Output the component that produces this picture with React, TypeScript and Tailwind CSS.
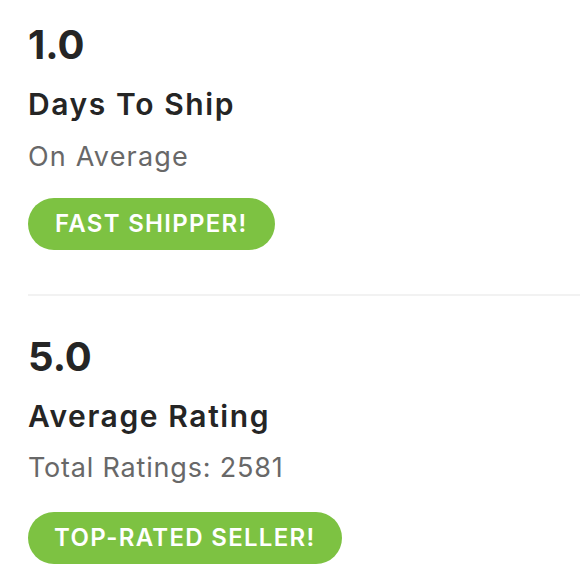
export default function App() {
  return (
    <div className="w-[580px] h-[580px] overflow-hidden bg-white font-['Inter','Liberation_Sans',sans-serif] text-[#252525]">
      <div className="pl-[28px] pt-[21px]">
        <div className="text-[40px] leading-[48px] font-bold">1.0</div>
        <div className="mt-[17px] text-[30px] leading-[36px] font-semibold tracking-[1.6px]">Days To Ship</div>
        <div className="mt-[18px] text-[27px] leading-[34px] tracking-[1.2px] text-[#686868]">On Average</div>
        <div className="mt-[24px] inline-flex h-[52px] items-center rounded-full bg-[#7dc242] px-[27px] text-[24px] font-semibold tracking-[1.3px] text-white">
          FAST SHIPPER!
        </div>
      </div>
      <div className="ml-[28px] mt-[44px] h-[2px] bg-[#f2f2f2]" />
      <div className="pl-[28px] pt-[37px]">
        <div className="text-[40px] leading-[48px] font-bold">5.0</div>
        <div className="mt-[17px] text-[30px] leading-[36px] font-semibold tracking-[1.6px]">Average Rating</div>
        <div className="mt-[17px] text-[27px] leading-[34px] tracking-[0.8px] text-[#686868]">Total Ratings: 2581</div>
        <div className="mt-[27px] inline-flex h-[52px] items-center rounded-full bg-[#7dc242] px-[26px] text-[24px] font-semibold tracking-[1.3px] text-white">
          TOP-RATED SELLER!
        </div>
      </div>
    </div>
  )
}
